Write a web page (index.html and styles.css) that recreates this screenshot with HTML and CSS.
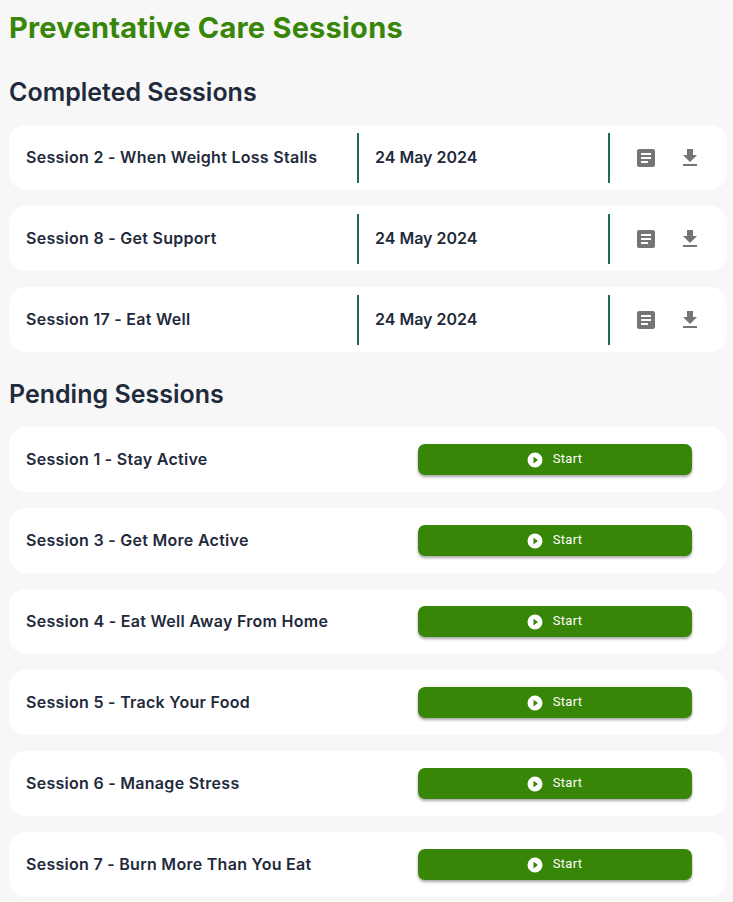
FILE: index.html
```html
<!DOCTYPE html>
<html lang="en">
<head>
<meta charset="utf-8">
<title>Preventative Care Sessions</title>
<link rel="stylesheet" href="styles.css">
</head>
<body>
<svg class="defs" width="0" height="0" aria-hidden="true">
  <symbol id="i-notes" viewBox="0 0 24 24"><path d="M19 3H5a2 2 0 0 0-2 2v14a2 2 0 0 0 2 2h14a2 2 0 0 0 2-2V5a2 2 0 0 0-2-2zM14 17H7v-2h7v2zm3-4H7v-2h10v2zm0-4H7V7h10v2z"/></symbol>
  <symbol id="i-download" viewBox="0 0 24 24"><path d="M19 9h-4V3H9v6H5l7 7 7-7zM5 18v2h14v-2H5z"/></symbol>
  <symbol id="i-play" viewBox="0 0 24 24"><path d="M12 2a10 10 0 1 0 0 20 10 10 0 0 0 0-20zm-2 14.500v-9l6 4.500-6 4.500z"/></symbol>
</svg>
<main class="page">
  <h1 class="title">Preventative Care Sessions</h1>

  <h2 class="section-title first">Completed Sessions</h2>
  <ul class="list">
    <li class="card done">
      <span class="name">Session 2 - When Weight Loss Stalls</span>
      <span class="date">24 May 2024</span>
      <span class="actions">
        <svg class="icon"><use href="#i-notes"/></svg>
        <svg class="icon"><use href="#i-download"/></svg>
      </span>
    </li>
    <li class="card done">
      <span class="name">Session 8 - Get Support</span>
      <span class="date">24 May 2024</span>
      <span class="actions">
        <svg class="icon"><use href="#i-notes"/></svg>
        <svg class="icon"><use href="#i-download"/></svg>
      </span>
    </li>
    <li class="card done">
      <span class="name">Session 17 - Eat Well</span>
      <span class="date">24 May 2024</span>
      <span class="actions">
        <svg class="icon"><use href="#i-notes"/></svg>
        <svg class="icon"><use href="#i-download"/></svg>
      </span>
    </li>
  </ul>

  <h2 class="section-title">Pending Sessions</h2>
  <ul class="list">
    <li class="card pending">
      <span class="name">Session 1 - Stay Active</span>
      <button class="start"><svg class="play"><use href="#i-play"/></svg><span>Start</span></button>
    </li>
    <li class="card pending">
      <span class="name">Session 3 - Get More Active</span>
      <button class="start"><svg class="play"><use href="#i-play"/></svg><span>Start</span></button>
    </li>
    <li class="card pending">
      <span class="name">Session 4 - Eat Well Away From Home</span>
      <button class="start"><svg class="play"><use href="#i-play"/></svg><span>Start</span></button>
    </li>
    <li class="card pending">
      <span class="name">Session 5 - Track Your Food</span>
      <button class="start"><svg class="play"><use href="#i-play"/></svg><span>Start</span></button>
    </li>
    <li class="card pending">
      <span class="name">Session 6 - Manage Stress</span>
      <button class="start"><svg class="play"><use href="#i-play"/></svg><span>Start</span></button>
    </li>
    <li class="card pending">
      <span class="name">Session 7 - Burn More Than You Eat</span>
      <button class="start"><svg class="play"><use href="#i-play"/></svg><span>Start</span></button>
    </li>
  </ul>
</main>
</body>
</html>
```
FILE: styles.css
```css
html, body {
  margin: 0;
  padding: 0;
  background: #f7f7f7;
}
.defs {
  display: block;
  height: 0;
}
.page {
  padding: 0 6px 0 9px;
  font-family: "Inter", "Noto Sans", sans-serif;
  color: #1f2a3c;
  height: 902px;
  overflow: hidden;
  box-sizing: border-box;
}
.title {
  margin: 0;
  padding-top: 11px;
  font-size: 29px;
  line-height: 34px;
  font-weight: 700;
  letter-spacing: 0.22px;
  color: #388607;
}
.section-title {
  margin: 0;
  padding-top: 26px;
  padding-bottom: 17px;
  font-size: 25px;
  line-height: 32px;
  font-weight: 600;
  letter-spacing: 0;
  color: #1f2a3c;
}
.section-title.first {
  padding-top: 31px;
}
.list {
  list-style: none;
  margin: 0;
  padding: 0;
  display: flex;
  flex-direction: column;
  gap: 16px;
}
.card {
  background: #fff;
  border-radius: 17px;
  height: 65px;
  box-sizing: border-box;
  padding: 8px 0 7px 17px;
  display: grid;
  align-items: center;
}
.card.done {
  grid-template-columns: 331px 253px 1fr;
}
.card.pending {
  grid-template-columns: 392px 274px;
  padding-top: 7px;
  padding-bottom: 8px;
}
.name {
  font-size: 16px;
  font-weight: 600;
  letter-spacing: 0.28px;
  color: #1f2a3c;
}
.done .name {
  padding-bottom: 2px;
}
.date {
  align-self: stretch;
  display: flex;
  align-items: center;
  padding-left: 16px;
  padding-bottom: 3px;
  border-left: 2px solid #1f6b4f;
  border-right: 2px solid #1f6b4f;
  font-size: 16px;
  font-weight: 600;
  color: #1f2a3c;
}
.actions {
  display: flex;
  align-items: center;
  padding-left: 24px;
  gap: 20px;
}
.icon {
  width: 24px;
  height: 24px;
  fill: #757575;
}
.start {
  height: 31px;
  border: 0;
  border-radius: 7px;
  background: #388607;
  color: #fff;
  font-family: "Roboto", sans-serif;
  font-size: 13px;
  font-weight: 400;
  letter-spacing: 0.3px;
  display: flex;
  align-items: center;
  justify-content: center;
  gap: 9px;
  padding: 0 2px 0 0;
  box-shadow: 0 2px 3px rgba(0, 0, 0, 0.35);
}
.start span {
  position: relative;
  top: -1px;
}
.play {
  width: 18px;
  height: 18px;
  fill: #fff;
  position: relative;
  top: 1px;
}
```
